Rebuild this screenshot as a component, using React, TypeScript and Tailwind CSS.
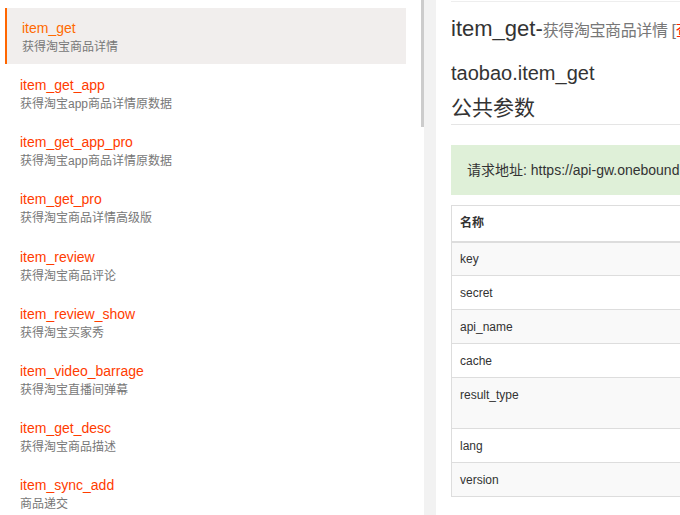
import React from "react";

const apis = [
  { name: "item_get", desc: "获得淘宝商品详情" },
  { name: "item_get_app", desc: "获得淘宝app商品详情原数据" },
  { name: "item_get_app_pro", desc: "获得淘宝app商品详情原数据" },
  { name: "item_get_pro", desc: "获得淘宝商品详情高级版" },
  { name: "item_review", desc: "获得淘宝商品评论" },
  { name: "item_review_show", desc: "获得淘宝买家秀" },
  { name: "item_video_barrage", desc: "获得淘宝直播间弹幕" },
  { name: "item_get_desc", desc: "获得淘宝商品描述" },
  { name: "item_sync_add", desc: "商品递交" },
];

const params = [
  { name: "key", tall: false },
  { name: "secret", tall: false },
  { name: "api_name", tall: false },
  { name: "cache", tall: false },
  { name: "result_type", tall: true },
  { name: "lang", tall: false },
  { name: "version", tall: false },
];

export default function App() {
  return (
    <div
      className="flex h-[515px] w-[680px] overflow-hidden bg-white"
      style={{ fontFamily: '"Liberation Sans", "Noto Sans CJK SC", sans-serif' }}
    >
      {/* sidebar */}
      <div className="relative w-[421px] shrink-0 pt-2">
        {apis.map((api, i) => (
          <div
            key={api.name}
            className={
              i === 0
                ? "ml-[5px] mr-[15px] h-[56px] border-l-2 border-[#ff6600] bg-[#f1eeed] pl-[15px] pt-[10px]"
                : "ml-[5px] mr-[15px] mt-px h-[56.2px] pl-[15px] pt-[10px]"
            }
          >
            <div className={i === 0 ? "text-[14px] leading-5 text-[#ff6a00]" : "text-[14px] leading-5 text-[#ff3c00]"}>
              {api.name}
            </div>
            <div className="mt-px text-[12px] leading-[17px] text-[#777]">{api.desc}</div>
          </div>
        ))}
      </div>

      {/* scrollbar + gutter */}
      <div className="relative w-[3px] shrink-0 bg-white">
        <div className="absolute left-0 top-0 h-[127px] w-[3px] bg-[#cccccc]" />
      </div>
      <div className="w-[12px] shrink-0 bg-[#f2f2f2]" />

      {/* content */}
      <div className="w-[700px] shrink-0 pl-[15px]">
        <div className="mt-px border-t border-[#eeeeee] pt-[13px]">
          <div className="whitespace-nowrap text-[22px] leading-7 text-[#333]">
            item_get-<span className="text-[16px] tracking-[-0.4px] text-[#777]">获得淘宝商品详情 [<span className="text-[#ff2200]">查看演示</span>]</span>
          </div>
          <div className="mt-[17px] text-[20px] leading-[22px] text-[#333]">taobao.item_get</div>
          <div className="mt-[11px] text-[21px] leading-[26px] text-[#333]">公共参数</div>
          <div className="mt-[3px] border-t border-[#e5e5e5]" />
        </div>

        <div className="mt-5 flex h-[50px] items-center bg-[#dff0d8] pl-4 text-[14px] text-[#333] whitespace-nowrap">
          请求地址: https://api-gw.onebound.cn/taobao/item_get
        </div>

        <table className="mt-[10px] w-full border-collapse border border-[#dddddd] text-[12px] text-[#333]">
          <thead>
            <tr className="h-[36px] border-b-2 border-[#dddddd]">
              <th className="px-2 text-left font-bold">名称</th>
              <th className="px-2 text-left font-bold">类型</th>
            </tr>
          </thead>
          <tbody>
            {params.map((p, i) => (
              <tr
                key={p.name}
                className={`${p.tall ? "h-[51px]" : "h-[34px]"} border-b border-[#dddddd] ${i % 2 === 0 ? "bg-[#f9f9f9]" : "bg-white"}`}
              >
                <td className={`px-2 ${p.tall ? "align-top pt-[8px]" : "align-middle"}`}>{p.name}</td>
                <td className="px-2" />
              </tr>
            ))}
          </tbody>
        </table>
      </div>
    </div>
  );
}
